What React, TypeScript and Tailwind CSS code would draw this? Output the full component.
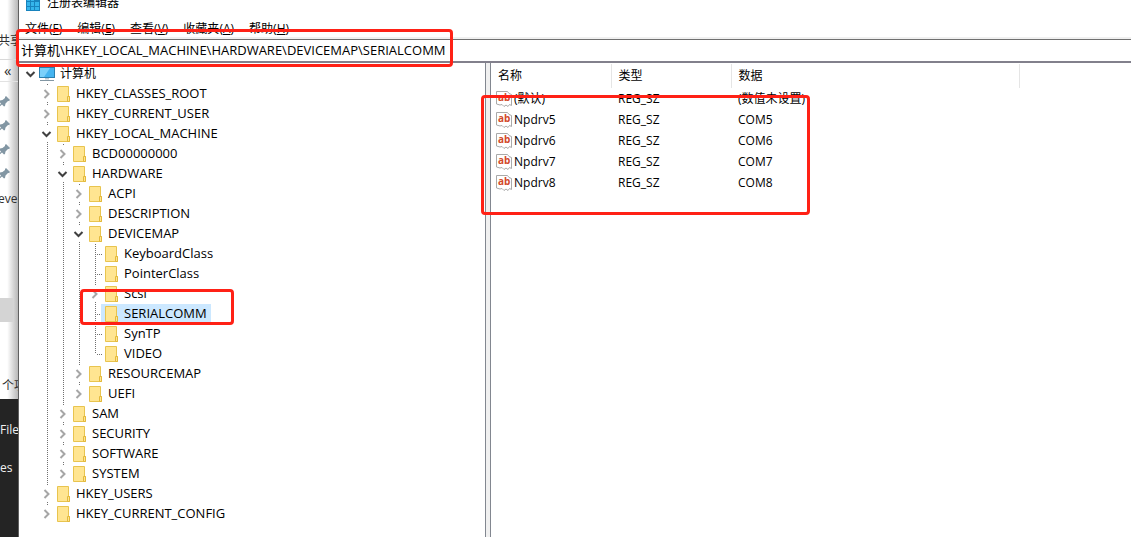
import React, { useState } from "react";

type TreeNode = {
  name: string;
  state?: "open" | "closed";
  children?: TreeNode[];
};

type TreeRowProperties = {
  readonly node: TreeNode;
  readonly guides: boolean[];
  readonly isLast: boolean;
  readonly selected: string;
  readonly onSelect: (name: string) => void;
};

const tree: TreeNode[] = [
  { name: "HKEY_CLASSES_ROOT", state: "closed" },
  { name: "HKEY_CURRENT_USER", state: "closed" },
  {
    name: "HKEY_LOCAL_MACHINE",
    state: "open",
    children: [
      { name: "BCD00000000", state: "closed" },
      {
        name: "HARDWARE",
        state: "open",
        children: [
          { name: "ACPI", state: "closed" },
          { name: "DESCRIPTION", state: "closed" },
          {
            name: "DEVICEMAP",
            state: "open",
            children: [
              { name: "KeyboardClass" },
              { name: "PointerClass" },
              { name: "Scsi", state: "closed" },
              { name: "SERIALCOMM" },
              { name: "SynTP" },
              { name: "VIDEO" },
            ],
          },
          { name: "RESOURCEMAP", state: "closed" },
          { name: "UEFI", state: "closed" },
        ],
      },
      { name: "SAM", state: "closed" },
      { name: "SECURITY", state: "closed" },
      { name: "SOFTWARE", state: "closed" },
      { name: "SYSTEM", state: "closed" },
    ],
  },
  { name: "HKEY_USERS", state: "closed" },
  { name: "HKEY_CURRENT_CONFIG", state: "closed" },
];

const menus = [
  { label: "文件", hotkey: "F" },
  { label: "编辑", hotkey: "E" },
  { label: "查看", hotkey: "V" },
  { label: "收藏夹", hotkey: "A" },
  { label: "帮助", hotkey: "H" },
];

const values = [
  { name: "(默认)", type: "REG_SZ", data: "(数值未设置)" },
  { name: "Npdrv5", type: "REG_SZ", data: "COM5" },
  { name: "Npdrv6", type: "REG_SZ", data: "COM6" },
  { name: "Npdrv7", type: "REG_SZ", data: "COM7" },
  { name: "Npdrv8", type: "REG_SZ", data: "COM8" },
];

const dotsDown = "w-px bg-[repeating-linear-gradient(to_bottom,#707070_0_1px,transparent_1px_2px)]";
const dotsAcross = "h-px bg-[repeating-linear-gradient(to_right,#707070_0_1px,transparent_1px_2px)]";

const Chevron = ({ open }: { readonly open: boolean }) => (
  <svg className="block h-4 w-4" viewBox="0 0 16 16" fill="none" strokeWidth="2">
    {open ? <path d="M3.500 6l4 4 4-4" stroke="#404040" /> : <path d="M5.500 4l4 4-4 4" stroke="#a6a6a6" />}
  </svg>
);

const FolderIcon = () => (
  <svg className="h-4 w-4 shrink-0" viewBox="0 0 16 16">
    <path d="M2.500 .5h11v10h1v5h-12z" fill="#ffe591" stroke="#e8c44f" />
    <path d="M12.500 15.500v-5h2v5z" fill="#ffe591" stroke="#e3b93c" />
  </svg>
);

const ComputerIcon = () => (
  <svg className="h-4 w-4 shrink-0" viewBox="0 0 16 16">
    <rect x=".5" y="1.500" width="15" height="10" fill="#45b4f0" stroke="#2b7fae" />
    <path d="M1 2h10L5 11H1z" fill="#7bd0fa" />
    <path d="M6 12h4v1.500H6z" fill="#b9c6cf" />
    <path d="M1 14.500h14" stroke="#8296a3" />
  </svg>
);

const StringIcon = () => (
  <svg className="h-4 w-4 shrink-0" viewBox="0 0 16 16">
    <path
      d="M.5 .5h11l1.500 2 2.500 1v11l-2-1-1.500 2-2-1.500-2 1.500-2-2-2 .5-3.500-1z"
      fill="#fff"
      stroke="#a9a9a9"
    />
    <text x="2" y="10" fontSize="10" fontWeight="700" fill="#d2492a" fontFamily="Open Sans, sans-serif">
      ab
    </text>
  </svg>
);

const RegeditIcon = () => (
  <svg className="h-4 w-4 shrink-0" viewBox="0 0 16 16">
    <path d="M1 1h9v3h5v11H1z" fill="#1883bd" />
    <path
      d="M2 2h3v3H2zM6 2h3v3H6zM2 6h3v4H2zM6 6h3v4H6zM10 6h4v4h-4zM2 11h3v3H2zM6 11h3v3H6zM10 11h4v3h-4z"
      fill="#35b5ec"
    />
  </svg>
);

const PinIcon = () => (
  <svg className="-ml-0.5 h-3 w-3" viewBox="0 0 12 12" fill="#8296a3">
    <path d="M8 0l4 4-1 1h-1L7.500 7.500 7 10l-1 .5-2-2L.5 11.500 0 11l3-3.500-2-2L1.500 4.500 4.500 4 7 2V1z" />
  </svg>
);

const TreeRow = ({ node, guides, isLast, selected, onSelect }: TreeRowProperties) => (
  <li>
    <div className="flex h-5 items-center">
      <span className="w-4 shrink-0" />
      {guides.map((visible, index) => (
        <span className="h-full w-4 shrink-0 pl-2" key={index}>
          {visible && <span className={`block h-full ${dotsDown}`} />}
        </span>
      ))}
      {node.state ? (
        <span className="flex h-full w-4 shrink-0 flex-col">
          <span className={`ml-2 h-0.5 ${dotsDown}`} />
          <button type="button" aria-label={node.name} aria-expanded={node.state === "open"}>
            <Chevron open={node.state === "open"} />
          </button>
          {!isLast && <span className={`ml-2 h-0.5 ${dotsDown}`} />}
        </span>
      ) : (
        <span className="flex h-full w-4 shrink-0 items-center pl-2">
          <span className={`self-start ${isLast ? "h-[10px]" : "h-full"} ${dotsDown}`} />
          <span className={`ml-px flex-1 ${dotsAcross}`} />
        </span>
      )}
      <button
        type="button"
        onClick={() => onSelect(node.name)}
        className={`-ml-0.5 flex h-5 items-center gap-[5px] pr-1 pl-0.5 ${node.name === selected ? "bg-[#cce8ff]" : ""}`}
      >
        <FolderIcon />
        <span className="pb-0.5">{node.name}</span>
      </button>
    </div>
    {node.children && (
      <ul>
        {node.children.map((child, index) => (
          <TreeRow
            key={child.name}
            node={child}
            guides={[...guides, !isLast]}
            isLast={index === node.children!.length - 1}
            selected={selected}
            onSelect={onSelect}
          />
        ))}
      </ul>
    )}
  </li>
);

const Backdrop = () => (
  <aside className="flex w-[18px] shrink-0 flex-col overflow-hidden bg-[#242424] whitespace-nowrap text-[#f0f0f0]">
    <div className="flex h-[399px] flex-col bg-linear-to-r from-white from-40% to-[#b8b8b8] text-[#303030]">
      <div className="h-[60px] border-b border-[#d9d9d9] pt-8">
        <span className="-ml-0.5">共享</span>
      </div>
      <div className="h-[22px] border-b border-[#e2e2e2] pl-1 text-[15px] leading-5">«</div>
      <div className="flex flex-col gap-3 pt-3.5">
        <PinIcon />
        <PinIcon />
        <PinIcon />
        <PinIcon />
      </div>
      <div className="pt-2.5">
        <span className="-ml-0.5">evel</span>
      </div>
      <div className="mt-[90px] h-6 w-[13px] bg-[#d4d4d4]" />
      <div className="mt-auto pb-1 pl-0.5">个项目</div>
    </div>
    <div className="pt-[22px]">File</div>
    <div className="pt-5">es</div>
  </aside>
);

const App = () => {
  const [selected, setSelected] = useState("SERIALCOMM");
  const [address, setAddress] = useState("计算机\\HKEY_LOCAL_MACHINE\\HARDWARE\\DEVICEMAP\\SERIALCOMM");

  return (
    <div className="relative flex h-screen overflow-hidden bg-white font-['Open_Sans','Noto_Sans_CJK_SC',sans-serif] text-[12px] leading-[18px] text-black">
      <Backdrop />
      <main className="flex min-w-0 flex-1 flex-col border-l border-[#606060]">
        <header className="flex h-[18px] shrink-0 items-end gap-1.5 pb-1.5 pl-1.5">
          <RegeditIcon />
          <h1>注册表编辑器</h1>
        </header>
        <nav className="flex h-[19px] shrink-0 gap-[15px] pt-0.5 pl-1.5">
          {menus.map((menu) => (
            <button type="button" key={menu.hotkey}>
              {menu.label}(<u>{menu.hotkey}</u>)
            </button>
          ))}
        </nav>
        <div className="shrink-0 border-t-2 border-[#f0f0f0]">
          <input
            aria-label="地址"
            className="block h-6 w-full border-t border-b-2 border-t-[#707070] border-b-[#82808c] pb-0.5 pl-0.5 text-[13px] outline-none"
            value={address}
            onChange={(event) => setAddress(event.target.value)}
          />
        </div>
        <div className="flex min-h-0 flex-1">
          <nav className="w-[42%] shrink-0 overflow-hidden border-r border-[#828790] pt-px pl-1">
            <div className="flex h-5 items-center">
              <button type="button" aria-label="计算机" aria-expanded>
                <Chevron open />
              </button>
              <ComputerIcon />
              <span className="pl-[5px]">计算机</span>
            </div>
            <ul className="text-[13px]">
              {tree.map((node, index) => (
                <TreeRow
                  key={node.name}
                  node={node}
                  guides={[]}
                  isLast={index === tree.length - 1}
                  selected={selected}
                  onSelect={setSelected}
                />
              ))}
            </ul>
          </nav>
          <div className="w-1 shrink-0 bg-[#f0f0f0]" />
          <section className="min-w-0 flex-1 border-l border-[#828790] pt-px">
            <table className="w-full table-fixed border-collapse text-left">
              <colgroup>
                <col className="w-[120px]" />
                <col className="w-[120px]" />
                <col className="w-[288px]" />
                <col />
              </colgroup>
              <thead>
                <tr className="h-6">
                  <th className="border-r border-[#e5e5e5] pl-[7px] font-normal">名称</th>
                  <th className="border-r border-[#e5e5e5] pl-[7px] font-normal">类型</th>
                  <th className="border-r border-[#e5e5e5] pl-[7px] font-normal">数据</th>
                  <th />
                </tr>
              </thead>
              <tbody>
                {values.map((value) => (
                  <tr className="h-[21px]" key={value.name}>
                    <td className="pl-[5px]">
                      <span className="flex items-center gap-0.5">
                        <StringIcon />
                        {value.name}
                      </span>
                    </td>
                    <td className="pl-[7px]">{value.type}</td>
                    <td className="pl-[7px]">{value.data}</td>
                    <td />
                  </tr>
                ))}
              </tbody>
            </table>
          </section>
        </div>
      </main>
      {/* red annotation frames over the window */}
      <div className="pointer-events-none absolute top-[29px] left-4 h-[38px] w-[437px] rounded-sm border-3 border-[#ff2116]" />
      <div className="pointer-events-none absolute top-[289px] left-20 h-9 w-[154px] rounded-sm border-3 border-[#ff2116]" />
      <div className="pointer-events-none absolute top-[95px] left-[481px] h-[120px] w-[329px] rounded-sm border-3 border-[#ff2116]" />
    </div>
  );
};

export default App;
